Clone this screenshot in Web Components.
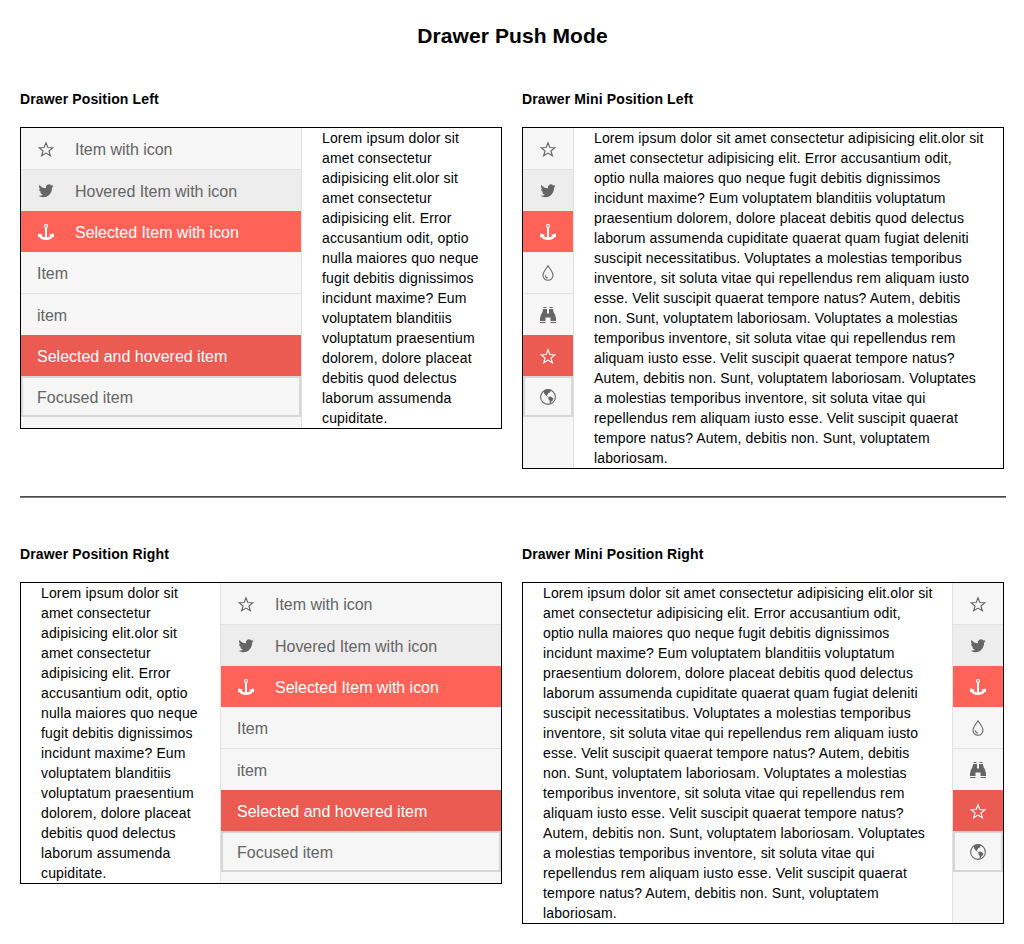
<!DOCTYPE html>
<html lang="en">
<head>
<meta charset="utf-8">
<title>Drawer Push Mode</title>
<style>
  html { background: #fff; }
  body { margin: 0; font: 14px/20px Arial, "Liberation Sans", sans-serif; color: #000; letter-spacing: .13px; }
</style>
</head>
<body>
<drawer-page></drawer-page>
<script>
const ICONS = {
  star: '<path d="M8 1.900 9.850 6.500l5 .3-3.900 3.150 1.400 4.800L8 12.100l-4.350 2.650 1.400-4.800L1.150 6.800l5-.3Z" fill="none" stroke="currentColor" stroke-width="1.15"/>',
  twitter: '<path transform="translate(.4 -.1) scale(.635 .66)" fill="currentColor" d="M23.953 4.57a10 10 0 01-2.825.775 4.958 4.958 0 002.163-2.723c-.951.555-2.005.959-3.127 1.184a4.92 4.92 0 00-8.384 4.482C7.69 8.095 4.067 6.13 1.64 3.162a4.822 4.822 0 00-.666 2.475c0 1.71.87 3.213 2.188 4.096a4.904 4.904 0 01-2.228-.616v.06a4.923 4.923 0 003.946 4.827 4.996 4.996 0 01-2.212.085 4.936 4.936 0 004.604 3.417 9.867 9.867 0 01-6.102 2.105c-.39 0-.779-.023-1.17-.067a13.995 13.995 0 007.557 2.209c9.053 0 13.998-7.496 13.998-13.985 0-.21 0-.42-.015-.63A9.935 9.935 0 0024 4.59z"/>',
  anchor: '<circle cx="8" cy="2" r="1.500" fill="none" stroke="currentColor" stroke-width="1.2"/><path fill="currentColor" d="M7 3.300h2v10c1.600-.2 2.800-.8 3.500-1.600L11.300 10.600 16 9.400v4l-1.200-.7C13.600 14.800 11.200 15.900 8 15.900S2.400 14.800 1.200 12.700L0 13.400v-4l4.700 1.200-1.200 1.100c.7.800 1.900 1.400 3.500 1.600Z"/>',
  drop: '<path d="M8 .7C6.200 3.600 3 7 3 10.300A5 5 0 0 0 13 10.300C13 7 9.800 3.600 8 .7Z" fill="none" stroke="currentColor" stroke-width="1.1"/><path d="M5.200 10.300C5.500 11.700 6.300 12.700 7.700 13.100" fill="none" stroke="currentColor" stroke-width="1.1"/>',
  binoculars: '<path fill="currentColor" d="M3.500 0H6.500v1h-3ZM9.500 0h3v1h-3ZM3.200 2H7v4.500h2V2h3.800l.9 3.500 1.300 2 1 4v2.500h-5.500v-3.500H5.500V14H0v-2.500l1-4 1.300-2ZM0 15h5.500v1H0ZM10.500 15H16v1h-5.500Z"/>',
  globe: '<circle cx="8" cy="8" r="7.400" fill="none" stroke="currentColor" stroke-width="1.100"/><path fill="currentColor" d="m3.600 2.600 2.400-1.900 4-.1.700 1-.5 1.400-1.100 1L8.300 4l-.7 1.400L6.700 6l.5 1 1.200.5-.6.3-1.900-1L4.200 4.600ZM8.500 8l1.700-.4 2 .8 1.200 1.100-.5 1.700-1.600 1.300-.9 2-.7-.3V11.800L8.300 10Z"/>'
};

class DrawerIcon extends HTMLElement {
  connectedCallback() {
    this.attachShadow({ mode: 'open' }).innerHTML = `
      <style>
        :host { display: block; width: 16px; height: 16px; margin: 0 1px 2px; flex: none; }
        svg { display: block; }
      </style>
      <svg width="16" height="16" viewBox="0 0 16 16" aria-hidden="true">${ICONS[this.getAttribute('name')]}</svg>`;
  }
}

class DrawerItem extends HTMLElement {
  connectedCallback() {
    const icon = this.getAttribute('icon');
    this.attachShadow({ mode: 'open' }).innerHTML = `
      <style>
        :host { display: flex; align-items: center; gap: 20px; box-sizing: border-box; height: 41px;
          padding: 3px 16px 0; color: #656565; font-size: 16px; line-height: 24px; letter-spacing: -.03px;
          white-space: nowrap; cursor: pointer; }
        :host([divided]) { height: 42px; border-bottom: 1px solid #e2e2e2; }
        :host([state~="hovered"]) { background: #ededed; }
        :host([state~="selected"]) { background: #ff6358; color: #fff; }
        :host([state~="selected"][state~="hovered"]) { background: #eb5b51; letter-spacing: 0; }
        :host([state~="focused"]) { box-shadow: inset 0 0 0 2px #d6d6d6; letter-spacing: 0; }
      </style>
      ${icon ? `<drawer-icon name="${icon}"></drawer-icon>` : ''}<slot></slot>`;
  }
}

class DrawerPanel extends HTMLElement {
  connectedCallback() {
    const right = this.getAttribute('position') === 'right';
    this.attachShadow({ mode: 'open' }).innerHTML = `
      <style>
        :host { display: flex; flex-direction: ${right ? 'row-reverse' : 'row'}; border: 1px solid #000; }
        nav { flex: none; width: 280px; background: #f6f6f6; border-${right ? 'left' : 'right'}: 1px solid #e2e2e2; }
        :host([mini]) nav { width: 50px; }
        .content { flex: 1; min-width: 0; padding: 0 18px 0 20px; }
        :host(:not([mini])) .content { letter-spacing: .15px; }
      </style>
      <nav><slot name="item"></slot></nav>
      <div class="content"><slot></slot></div>`;
  }
}

const FULL_ITEMS = `
  <drawer-item slot="item" icon="star" divided>Item with icon</drawer-item>
  <drawer-item slot="item" icon="twitter" state="hovered">Hovered Item with icon</drawer-item>
  <drawer-item slot="item" icon="anchor" state="selected">Selected Item with icon</drawer-item>
  <drawer-item slot="item" divided>Item</drawer-item>
  <drawer-item slot="item">item</drawer-item>
  <drawer-item slot="item" state="selected hovered">Selected and hovered item</drawer-item>
  <drawer-item slot="item" state="focused">Focused item</drawer-item>`;
const MINI_ITEMS = `
  <drawer-item slot="item" icon="star" divided></drawer-item>
  <drawer-item slot="item" icon="twitter" state="hovered"></drawer-item>
  <drawer-item slot="item" icon="anchor" state="selected"></drawer-item>
  <drawer-item slot="item" icon="drop" divided></drawer-item>
  <drawer-item slot="item" icon="binoculars"></drawer-item>
  <drawer-item slot="item" icon="star" state="selected hovered"></drawer-item>
  <drawer-item slot="item" icon="globe" state="focused"></drawer-item>`;
const INTRO = 'Lorem ipsum dolor sit amet consectetur adipisicing elit.olor sit amet consectetur adipisicing elit. Error accusantium odit, optio nulla maiores quo neque fugit debitis dignissimos incidunt maxime? Eum voluptatem blanditiis voluptatum praesentium dolorem, dolore placeat debitis quod delectus laborum assumenda ';
const REPEAT = 'Voluptates a molestias temporibus inventore, sit soluta vitae qui repellendus rem aliquam iusto esse. Velit suscipit quaerat tempore natus? Autem, debitis non. Sunt, voluptatem laboriosam. ';
const SHORT_TEXT = INTRO + 'cupiditate.';
const LONG_TEXT = INTRO + 'cupiditate quaerat quam fugiat deleniti suscipit necessitatibus. ' + REPEAT.repeat(3);

class DrawerPage extends HTMLElement {
  connectedCallback() {
    const row = side => {
      const name = side[0].toUpperCase() + side.slice(1);
      return `<div class="row">
        <section><h4>Drawer Position ${name}</h4><drawer-panel position="${side}">${FULL_ITEMS}${SHORT_TEXT}</drawer-panel></section>
        <section><h4>Drawer Mini Position ${name}</h4><drawer-panel mini position="${side}">${MINI_ITEMS}${LONG_TEXT}</drawer-panel></section>
      </div>`;
    };
    this.attachShadow({ mode: 'open' }).innerHTML = `
      <style>
        :host { display: block; padding: 20px 18px 20px 20px; }
        h2 { margin: 0 1px 37px 0; font-size: 21px; line-height: 32px; text-align: center; letter-spacing: .08px; }
        .row { display: grid; grid-template-columns: 482px 482px; gap: 20px; align-items: start; }
        h4 { margin: 0 0 18px; font-size: 14px; line-height: 20px; }
        hr { height: 2px; margin: 27px 0 46px; border: 0; background: linear-gradient(#4c4c4c 50%, #808080 50%); }
      </style>
      <h2>Drawer Push Mode</h2>
      ${row('left')}
      <hr>
      ${row('right')}`;
  }
}

customElements.define('drawer-icon', DrawerIcon);
customElements.define('drawer-item', DrawerItem);
customElements.define('drawer-panel', DrawerPanel);
customElements.define('drawer-page', DrawerPage);
</script>
</body>
</html>
